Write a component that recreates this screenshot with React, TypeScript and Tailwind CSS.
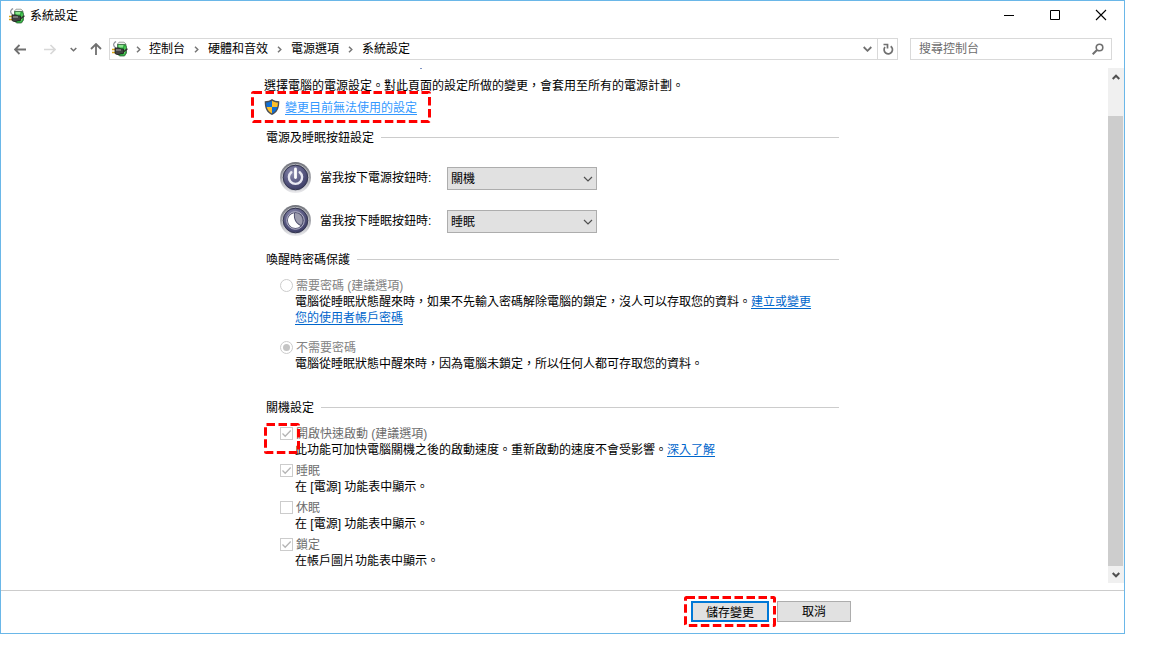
import type { ReactNode } from "react";

interface SectionProps {
  title: string;
  children: ReactNode;
}

interface ButtonActionProps {
  id: string;
  label: string;
  value: string;
  options: string[];
  icon: ReactNode;
}

interface OptionProps {
  id: string;
  label: string;
  checked?: boolean;
  children: ReactNode;
}

const crumbs = ["控制台", "硬體和音效", "電源選項", "系統設定"];
const linkClass = "text-[#0066cc] underline underline-offset-2";

function PowerPlugIcon() {
  return (
    <svg className="h-4 w-4 shrink-0" viewBox="0 0 16 16" aria-hidden="true">
      <path d="M5.500 3L7 1.200h5L14 3v1H5.500z" fill="#eef2ee" stroke="#8a8f8a" strokeWidth=".8" />
      <path d="M5.500 3.500h8l1 2v6.500l-2 3H7.500l-2-2z" fill="#27a53a" stroke="#3c6b43" strokeWidth=".8" />
      <path d="M6.500 4h5l-.5 2.500H6.500z" fill="#8be38c" />
      <path d="M13 5.500v5l-1.500 3" fill="none" stroke="#63d463" strokeWidth="1.200" />
      <path d="M4.500 7.500C2 6 1.200 4 2 2.500S3.500 1 4 .5" fill="none" stroke="#8f939b" strokeWidth="1.200" />
      <path d="M0 8.500h3.500M0 11.500h3.500" stroke="#d9a514" strokeWidth="1.600" />
      <path d="M3 7h4l2 1h2.500v4.500H9L7 13.500H5L3 12.500z" fill="#434343" stroke="#1f1f1f" strokeWidth=".8" />
      <path d="M4 9h5" stroke="#9b9b9b" strokeWidth="1.200" />
      <path d="M11.500 10.500c2 0 2-2 4-2.500" fill="none" stroke="#303030" strokeWidth="1.500" />
    </svg>
  );
}

function ShieldIcon() {
  return (
    <svg className="h-4 w-4 shrink-0" viewBox="0 0 16 16" aria-hidden="true">
      <path d="M8 0c2 1.600 4.300 2.200 7.300 2.200C15.300 9 13.500 13.500 8 16 2.500 13.500.7 9 .7 2.200 3.700 2.200 6 1.600 8 0z" fill="#4a4f55" />
      <path d="M8 1.800V8H2.700C2.300 6.500 2.100 5 2.100 3.600 4.400 3.500 6.300 3 8 1.800z" fill="#0f6fd6" />
      <path d="M8 1.800V8h5.300c.4-1.500.6-3 .6-4.400C11.600 3.500 9.700 3 8 1.800z" fill="#fdbf2a" />
      <path d="M8 14.400V8H2.700c.8 3 2.300 5.100 5.300 6.400z" fill="#fdbf2a" />
      <path d="M8 14.400V8h5.300c-.8 3-2.300 5.100-5.300 6.400z" fill="#0f6fd6" />
    </svg>
  );
}

function RoundIcon({ id, children }: { id: string; children: ReactNode }) {
  return (
    <svg className="h-8 w-8 shrink-0" viewBox="0 0 32 32" aria-hidden="true">
      <defs>
        <linearGradient id={`${id}-rim`} x1="0" y1="0" x2="0" y2="1">
          <stop offset="0" stopColor="#70727a" />
          <stop offset=".5" stopColor="#a2a3a9" />
          <stop offset="1" stopColor="#ececef" />
        </linearGradient>
        <radialGradient id={`${id}-face`} cx=".4" cy=".3" r=".75">
          <stop offset="0" stopColor="#8e8eb0" />
          <stop offset=".6" stopColor="#56567f" />
          <stop offset="1" stopColor="#3a3a63" />
        </radialGradient>
      </defs>
      <circle cx="15.500" cy="15.500" r="15.500" fill={`url(#${id}-rim)`} />
      <circle cx="15.500" cy="15.500" r="13.200" fill="none" stroke="#c9cad0" strokeWidth=".8" />
      <circle cx="15.500" cy="15.500" r="12.300" fill={`url(#${id}-face)`} stroke="#34364f" />
      {children}
    </svg>
  );
}

function PowerIcon() {
  return (
    <RoundIcon id="power">
      <path d="M11.300 10.200a6.600 6.600 0 1 0 8.400 0" fill="none" stroke="#e9e9f2" strokeWidth="2.400" strokeLinecap="round" />
      <path d="M15.500 7v8.500" stroke="#fff" strokeWidth="2.800" strokeLinecap="round" />
    </RoundIcon>
  );
}

function SleepIcon() {
  return (
    <RoundIcon id="sleep">
      <circle cx="15.500" cy="15.500" r="8.800" fill="#50506f" stroke="#b4b4c8" />
      <path d="M15 8c4.500 0 7.500 3.500 7.500 7.500 0 1.800-.5 3.300-1.500 4.500-4-1.500-7-6-6-12z" fill="#9c9cae" />
      <path d="M14 8.200c-3.800.8-6.200 4-6 7.800.3 4.200 3.700 7 7.500 7 2 0 3.800-.7 5-2.200-4.700-2-7.300-6.800-6.500-12.600z" fill="#fff" />
    </RoundIcon>
  );
}

function SelectArrow() {
  return (
    <svg
      className="pointer-events-none absolute top-[9px] right-1 h-[6px] w-[10px]"
      viewBox="0 0 10 6"
      fill="none"
      stroke="#505050"
      strokeWidth="1.200"
      aria-hidden="true"
    >
      <path d="M1 1l4 4 4-4" />
    </svg>
  );
}

function CrumbArrow() {
  return (
    <svg className="h-[7px] w-[5px]" viewBox="0 0 5 7" fill="none" stroke="#777" strokeWidth="1.500" aria-hidden="true">
      <path d="M1 .7l2.800 2.800L1 6.300" />
    </svg>
  );
}

// Red dashed frame laid over the control it points out
function Highlight({ className }: { className: string }) {
  return (
    <svg className={`pointer-events-none absolute ${className}`} aria-hidden="true">
      <rect
        className="h-[calc(100%-3px)] w-[calc(100%-3px)]"
        x="1.500"
        y="1.500"
        rx="1"
        fill="none"
        stroke="#ff0000"
        strokeWidth="3"
        strokeDasharray="8.500 3.500"
      />
    </svg>
  );
}

function TitleBar() {
  return (
    <header className="flex h-[30px] shrink-0 items-start">
      <div className="flex h-full flex-1 items-center gap-[5px] pl-2">
        <PowerPlugIcon />
        <h1>系統設定</h1>
      </div>
      <button className="flex h-7 w-[46px] items-center justify-center" aria-label="最小化">
        <svg className="h-3 w-3" viewBox="0 0 12 12" stroke="#000">
          <path d="M1 6.500h10" />
        </svg>
      </button>
      <button className="flex h-7 w-[46px] items-center justify-center" aria-label="最大化">
        <svg className="h-3 w-3" viewBox="0 0 12 12" fill="none" stroke="#000">
          <path d="M1.500 1.500h9v9h-9z" />
        </svg>
      </button>
      <button className="flex h-7 w-[46px] items-center justify-center" aria-label="關閉">
        <svg className="h-3 w-3" viewBox="0 0 12 12" stroke="#000" strokeWidth="1.100">
          <path d="M1 1l10 10M11 1L1 11" />
        </svg>
      </button>
    </header>
  );
}

function NavBar() {
  return (
    <nav className="mt-[7px] flex h-[22px] shrink-0 items-center pr-3 text-[#707070]">
      <button className="ml-3 flex w-[14px] justify-center" aria-label="上一頁">
        <svg className="h-[11px] w-3" viewBox="0 0 12 11" fill="none" stroke="currentColor" strokeWidth="1.800">
          <path d="M12 5.500H1M5.500 1L1 5.500 5.500 10" />
        </svg>
      </button>
      <button className="ml-4 flex w-[14px] justify-center text-[#d8d8d8]" aria-label="下一頁">
        <svg className="h-[11px] w-3" viewBox="0 0 12 11" fill="none" stroke="currentColor" strokeWidth="1.600">
          <path d="M0 5.500h11M6.500 1L11 5.500 6.500 10" />
        </svg>
      </button>
      <button className="ml-3 flex w-2 justify-center" aria-label="最近的位置">
        <svg className="h-[5px] w-[7px]" viewBox="0 0 7 5" fill="none" stroke="currentColor" strokeWidth="1.500">
          <path d="M.7 1l2.800 2.800L6.300 1" />
        </svg>
      </button>
      <button className="ml-3 flex w-[14px] justify-center" aria-label="上移">
        <svg className="h-3 w-3" viewBox="0 0 12 12" fill="none" stroke="currentColor" strokeWidth="1.800">
          <path d="M6 12V1M1 6l5-5 5 5" />
        </svg>
      </button>
      <div className="ml-[6px] flex h-full flex-1 items-center border border-[#d9d9d9] pl-[2px]">
        <PowerPlugIcon />
        <ol className="flex flex-1 items-center text-black">
          {crumbs.map((crumb, i) => (
            <li key={crumb} className="flex items-center">
              <span className={i === 0 ? "flex w-[21px] justify-center" : "flex w-[23px] justify-center"}>
                <CrumbArrow />
              </span>
              <a href="#">{crumb}</a>
            </li>
          ))}
        </ol>
        <button className="flex w-5 justify-center" aria-label="先前的位置">
          <svg className="h-[6px] w-[9px]" viewBox="0 0 9 6" fill="none" stroke="currentColor" strokeWidth="1.800">
            <path d="M.7 1l3.800 3.800L8.300 1" />
          </svg>
        </button>
        <button className="flex h-full w-5 items-center justify-center border-l border-[#d9d9d9]" aria-label="重新整理">
          <svg className="h-3 w-3" viewBox="0 0 12 12" fill="none" stroke="currentColor" strokeWidth="1.700">
            <path d="M8.700 3.200A4.200 4.200 0 1 1 3 4" />
            <path d="M1.500 1.500h4v4" />
          </svg>
        </button>
      </div>
      <div className="ml-3 flex h-full w-[202px] items-center border border-[#d9d9d9] pr-[7px] pl-2">
        <input
          type="search"
          aria-label="搜尋控制台"
          placeholder="搜尋控制台"
          className="min-w-0 flex-1 outline-none placeholder:text-[#6d6d6d]"
        />
        <svg className="h-3 w-3" viewBox="0 0 12 12" fill="none" stroke="currentColor" strokeWidth="1.600" aria-hidden="true">
          <circle cx="7.500" cy="4.500" r="3.300" />
          <path d="M5 7L.7 11.300" strokeWidth="2" />
        </svg>
      </div>
    </nav>
  );
}

function Section({ title, children }: SectionProps) {
  return (
    <section>
      <div className="flex h-4 items-center gap-[7px] pl-[2px]">
        <h2 className="pt-[2px]">{title}</h2>
        <div className="h-px flex-1 bg-[#cccccc]" />
      </div>
      {children}
    </section>
  );
}

function ButtonAction({ id, label, value, options, icon }: ButtonActionProps) {
  return (
    <div className="flex items-center">
      {icon}
      <label htmlFor={id} className="ml-2 w-[127px]">
        {label}
      </label>
      <div className="relative">
        <select
          id={id}
          defaultValue={value}
          className="block h-[23px] w-[150px] appearance-none border border-[#adadad] bg-[#e1e1e1] pt-[2px] pl-[3px]"
        >
          {options.map((option) => (
            <option key={option}>{option}</option>
          ))}
        </select>
        <SelectArrow />
      </div>
    </div>
  );
}

function RadioOption({ id, label, checked, children }: OptionProps) {
  return (
    <div>
      <div className="flex h-[17px] items-center gap-[3px] text-[#838383]">
        <input
          id={id}
          type="radio"
          name="wake-password"
          disabled
          defaultChecked={checked}
          className="flex h-[13px] w-[13px] appearance-none items-center justify-center rounded-full border border-[#cccccc] bg-white checked:before:h-[7px] checked:before:w-[7px] checked:before:rounded-full checked:before:bg-[#c4c4c4] checked:before:content-['']"
        />
        <label htmlFor={id}>{label}</label>
      </div>
      <p className="max-w-[535px] pl-[15px]">{children}</p>
    </div>
  );
}

function CheckOption({ id, label, checked, children }: OptionProps) {
  return (
    <div>
      <div className="relative flex h-[17px] items-center gap-[3px] text-[#6d6d6d]">
        <input
          id={id}
          type="checkbox"
          disabled
          defaultChecked={checked}
          className="peer h-[13px] w-[13px] appearance-none border border-[#cccccc] bg-white"
        />
        <svg
          className="pointer-events-none absolute top-[2px] left-0 hidden h-[13px] w-[13px] peer-checked:block"
          viewBox="0 0 13 13"
          fill="none"
          stroke="#b5b5b5"
          strokeWidth="1.300"
        >
          <path d="M2.500 6.500l2.700 2.700L10.700 3.500" />
        </svg>
        <label htmlFor={id}>{label}</label>
      </div>
      <p className="pl-[15px]">{children}</p>
    </div>
  );
}

function ScrollBar() {
  return (
    <div className="flex w-4 shrink-0 flex-col bg-[#f0f0f0] text-[#505050]">
      <button className="flex h-[17px] items-center justify-center" aria-label="向上捲動">
        <svg className="h-[6px] w-2" viewBox="0 0 8 6" fill="none" stroke="currentColor" strokeWidth="2">
          <path d="M.7 5L4 1.700 7.300 5" />
        </svg>
      </button>
      <div className="mt-[31px] mr-px flex-1 bg-[#cdcdcd]" />
      <button className="flex h-[17px] items-center justify-center" aria-label="向下捲動">
        <svg className="h-[6px] w-2" viewBox="0 0 8 6" fill="none" stroke="currentColor" strokeWidth="2">
          <path d="M.7 1L4 4.300 7.300 1" />
        </svg>
      </button>
    </div>
  );
}

export default function App() {
  return (
    <div className="flex min-h-screen flex-col bg-white pr-[27px] pb-[14px] font-['Liberation_Sans','Noto_Sans_CJK_TC',sans-serif] text-xs leading-4 text-black">
      <div className="flex flex-1 flex-col border border-[#6ab7e8]">
        <TitleBar />
        <NavBar />
        <div className="mt-2 mb-[7px] flex flex-1">
          <main className="flex-1 pl-[263px]">
            <div className="max-w-[575px]">
              {/* bottom edge of the scrolled-off page title */}
              <div className="ml-[156px] h-px w-[2px] bg-[#7f95c4]" />
              <p className="mt-[9px]">選擇電腦的電源設定。對此頁面的設定所做的變更，會套用至所有的電源計劃。</p>
              <div className="relative mt-[5px] mb-[14px] flex h-4 w-max items-center gap-[5px]">
                <ShieldIcon />
                <a href="#" className="pt-[2px] text-[#3399ff] underline underline-offset-2">
                  變更目前無法使用的設定
                </a>
                <Highlight className="-top-2 -left-[13px] h-8 w-[180px]" />
              </div>

              <Section title="電源及睡眠按鈕設定">
                <div className="mt-[17px] mb-[14px] flex flex-col gap-[11px] pl-4">
                  <ButtonAction
                    id="power-button"
                    label="當我按下電源按鈕時:"
                    value="關機"
                    options={["不進行動作", "睡眠", "休眠", "關機"]}
                    icon={<PowerIcon />}
                  />
                  <ButtonAction
                    id="sleep-button"
                    label="當我按下睡眠按鈕時:"
                    value="睡眠"
                    options={["不進行動作", "睡眠", "休眠", "關機"]}
                    icon={<SleepIcon />}
                  />
                </div>
              </Section>

              <Section title="喚醒時密碼保護">
                <div className="mt-[10px] mb-[27px] flex flex-col gap-[13px] pl-4">
                  <RadioOption id="need-password" label="需要密碼 (建議選項)">
                    電腦從睡眠狀態醒來時，如果不先輸入密碼解除電腦的鎖定，沒人可以存取您的資料。
                    <a href="#" className={linkClass}>
                      建立或變更您的使用者帳戶密碼
                    </a>
                  </RadioOption>
                  <RadioOption id="no-password" label="不需要密碼" checked>
                    電腦從睡眠狀態中醒來時，因為電腦未鎖定，所以任何人都可存取您的資料。
                  </RadioOption>
                </div>
              </Section>

              <Section title="關機設定">
                <div className="relative mt-[10px] flex flex-col gap-1 pl-4">
                  <CheckOption id="fast-startup" label="開啟快速啟動 (建議選項)" checked>
                    此功能可加快電腦關機之後的啟動速度。重新啟動的速度不會受影響。
                    <a href="#" className={linkClass}>
                      深入了解
                    </a>
                  </CheckOption>
                  <CheckOption id="sleep" label="睡眠" checked>
                    在 [電源] 功能表中顯示。
                  </CheckOption>
                  <CheckOption id="hibernate" label="休眠">
                    在 [電源] 功能表中顯示。
                  </CheckOption>
                  <CheckOption id="lock" label="鎖定" checked>
                    在帳戶圖片功能表中顯示。
                  </CheckOption>
                  <Highlight className="-top-[2px] left-0 h-[31px] w-9" />
                </div>
              </Section>
            </div>
          </main>
          <ScrollBar />
        </div>
        <footer className="flex h-[43px] shrink-0 items-center gap-2 border-t border-[#cccccc] pb-[2px] pl-[690px]">
          <div className="relative">
            <button className="block h-[21px] w-[78px] border-2 border-[#0078d7] bg-[#e1e1e1] pt-[2px] leading-4">儲存變更</button>
            <Highlight className="-top-[5px] -left-[7px] h-[31px] w-[92px]" />
          </div>
          <button className="h-[21px] w-[74px] border border-[#adadad] bg-[#e1e1e1] pt-[2px] leading-4">取消</button>
        </footer>
      </div>
    </div>
  );
}
